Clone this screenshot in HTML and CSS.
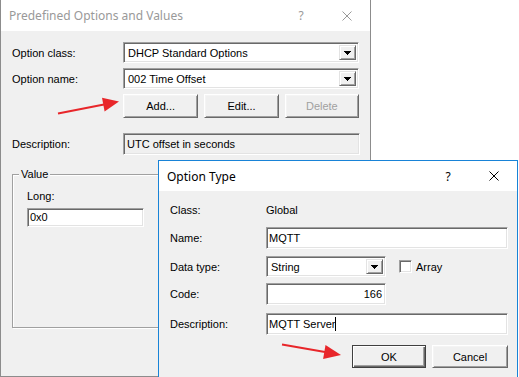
FILE: index.html
```html
<!DOCTYPE html>
<html lang="en">
<head>
    <meta charset="UTF-8">
    <meta name="viewport" content="width=device-width, initial-scale=1.0">
    <title>Predefined Options and Values</title>
    <link rel="stylesheet" href="styles.css">
</head>
<body>
<div class="desktop">
    <section class="dialog dialog-back">
        <header class="titlebar">
            <span class="title">Predefined Options and Values</span>
            <span class="tb-btn tb-help">?</span>
            <span class="tb-btn tb-close">
                <svg width="10" height="10" viewBox="0 0 10 10"><path d="M0.5 0.5L9.5 9.5M9.5 0.5L0.5 9.5"/></svg>
            </span>
        </header>
        <div class="dialog-body back-body">
            <div class="form-row">
                <span class="label">Option class:</span>
                <div class="combo combo-wide">
                    <span class="combo-text">DHCP Standard Options</span>
                    <span class="drop"><svg width="7" height="4" viewBox="0 0 7 4"><polygon points="0,0 7,0 3.5,4"/></svg></span>
                </div>
            </div>
            <div class="form-row row-name">
                <span class="label">Option name:</span>
                <div class="combo combo-wide">
                    <span class="combo-text">002 Time Offset</span>
                    <span class="drop"><svg width="7" height="4" viewBox="0 0 7 4"><polygon points="0,0 7,0 3.5,4"/></svg></span>
                </div>
            </div>
            <div class="btn-row back-buttons">
                <button class="btn btn-add">Add...</button>
                <button class="btn">Edit...</button>
                <button class="btn" disabled>Delete</button>
            </div>
            <div class="form-row row-desc">
                <span class="label">Description:</span>
                <div class="field field-readonly">UTC offset in seconds</div>
            </div>
            <div class="group">
                <span class="group-title">Value</span>
                <div class="group-content">
                    <span class="label">Long:</span>
                    <div class="field field-long">0x0</div>
                </div>
            </div>
        </div>
    </section>

    <section class="dialog dialog-front">
        <header class="titlebar">
            <span class="title">Option Type</span>
            <span class="tb-btn tb-help">?</span>
            <span class="tb-btn tb-close">
                <svg width="10" height="10" viewBox="0 0 10 10"><path d="M0.5 0.5L9.5 9.5M9.5 0.5L0.5 9.5"/></svg>
            </span>
        </header>
        <div class="dialog-body front-body">
            <div class="form-row row-class">
                <span class="label">Class:</span>
                <span class="value">Global</span>
            </div>
            <div class="form-row row-gap7">
                <span class="label">Name:</span>
                <div class="field field-full">MQTT</div>
            </div>
            <div class="form-row row-gap7">
                <span class="label">Data type:</span>
                <div class="type-line">
                    <div class="combo combo-short">
                        <span class="combo-text">String</span>
                        <span class="drop"><svg width="7" height="4" viewBox="0 0 7 4"><polygon points="0,0 7,0 3.5,4"/></svg></span>
                    </div>
                    <span class="check"></span>
                    <span class="check-label">Array</span>
                </div>
            </div>
            <div class="form-row row-code">
                <span class="label">Code:</span>
                <div class="field field-code">166</div>
            </div>
            <div class="form-row row-fdesc">
                <span class="label">Description:</span>
                <div class="field field-full">MQTT Server<span class="caret"></span></div>
            </div>
            <div class="btn-row front-buttons">
                <button class="btn btn-default">OK</button>
                <button class="btn btn-cancel">Cancel</button>
            </div>
        </div>
    </section>

    <svg class="arrows" width="519" height="377" viewBox="0 0 519 377">
        <line x1="58" y1="113.5" x2="104" y2="104.5"/>
        <polygon points="119,101.5 104.6,111.5 102,97.7"/>
        <line x1="282" y1="344.5" x2="325" y2="352"/>
        <polygon points="341,355 323.1,358.9 325.5,345.1"/>
    </svg>
</div>
</body>
</html>
```

FILE: styles.css
```css
body {
    margin: 0;
    background: #ffffff;
    font-family: "Liberation Sans", Arial, sans-serif;
    font-size: 11px;
    color: #000;
    overflow: hidden;
}
.desktop {
    position: relative;
    width: 519px;
    height: 377px;
    overflow: hidden;
}

/* windows */
.dialog {
    position: absolute;
    box-sizing: border-box;
    display: flex;
    flex-direction: column;
}
.dialog-back {
    left: 0;
    top: 0;
    width: 371px;
    height: 377px;
    border: 1px solid #8c8c8c;
    border-top: 0;
}
.dialog-front {
    left: 158px;
    top: 160px;
    width: 360px;
    height: 230px;
    border: 1px solid #1883d7;
}
.titlebar {
    display: flex;
    align-items: center;
    height: 31px;
    background: #fff;
    padding-left: 8px;
    font-family: "Noto Sans", "Open Sans", sans-serif;
    font-size: 12px;
}
.dialog-front .titlebar {
    height: 30px;
}
.dialog-back .titlebar {
    color: #999;
}
.title {
    flex: 1;
}
.tb-btn {
    width: 46px;
    height: 100%;
    display: flex;
    align-items: center;
    justify-content: center;
}
.tb-close svg {
    stroke: currentColor;
    stroke-width: 1;
}
.dialog-body {
    flex: 1;
    background: #f0f0f0;
}
.back-body {
    padding: 11px 11px 0 11px;
}
.front-body {
    padding: 8px 9px 0 11px;
}

/* rows */
.form-row {
    display: grid;
    grid-template-columns: 111px auto;
    align-items: center;
}
.front-body .form-row {
    grid-template-columns: 96px auto;
}
.row-name {
    margin-top: 5px;
}
.row-desc {
    margin-top: 15px;
}
.row-class {
    height: 21px;
}
.row-gap7 {
    margin-top: 7px;
}
.row-code {
    margin-top: 6px;
}
.row-fdesc {
    margin-top: 8px;
}

/* sunken controls */
.field,
.combo,
.check {
    box-sizing: border-box;
    border: 1px solid;
    border-color: #a0a0a0 #fff #fff #a0a0a0;
    box-shadow: inset 1px 1px 0 #696969, inset -1px -1px 0 #e3e3e3;
    background: #fff;
}
.field {
    height: 22px;
    line-height: 20px;
    padding-left: 2px;
    white-space: nowrap;
}
.field-readonly {
    width: 237px;
    background: #f0f0f0;
    padding-left: 3px;
}
.field-full {
    width: 242px;
}
.field-code {
    width: 120px;
    text-align: right;
    padding-right: 3px;
}
.field-long {
    width: 117px;
    height: 19px;
    line-height: 17px;
}
.caret {
    display: inline-block;
    width: 1px;
    height: 14px;
    background: #000;
    vertical-align: -3px;
}

.combo {
    display: flex;
    height: 21px;
    padding: 2px;
}
.combo-wide {
    width: 236px;
}
.combo-short {
    width: 120px;
}
.combo-text {
    flex: 1;
    line-height: 17px;
    padding-left: 2px;
}
.drop {
    box-sizing: border-box;
    width: 17px;
    display: flex;
    align-items: center;
    justify-content: center;
    background: #f0f0f0;
    border: 1px solid;
    border-color: #e3e3e3 #696969 #696969 #e3e3e3;
    box-shadow: inset 1px 1px 0 #fff, inset -1px -1px 0 #a0a0a0;
}
.drop svg {
    shape-rendering: crispEdges;
}

.type-line {
    display: flex;
    align-items: center;
}
.check {
    width: 13px;
    height: 13px;
    margin-left: 13px;
}
.check-label {
    margin-left: 4px;
}

/* buttons */
.btn-row {
    display: flex;
    gap: 6px;
}
.back-buttons {
    margin-top: 5px;
    padding-left: 111px;
}
.front-buttons {
    margin-top: 10px;
    justify-content: flex-end;
}
.btn {
    box-sizing: border-box;
    width: 75px;
    height: 24px;
    margin: 0;
    padding: 0;
    font-family: inherit;
    font-size: 11px;
    color: #000;
    background: #f0f0f0;
    border: 1px solid;
    border-color: #fff #696969 #696969 #fff;
    box-shadow: inset 1px 1px 0 #f4f4f4, inset -1px -1px 0 #a0a0a0;
    border-radius: 0;
}
.btn-add {
    width: 76px;
}
.btn:disabled {
    color: #a0a0a0;
}
.front-buttons .btn {
    height: 23px;
}
.btn-default {
    width: 74px;
    border-color: #404040;
    box-shadow: inset 1px 1px 0 #fff, inset -1px -1px 0 #696969, inset -2px -2px 0 #a0a0a0;
}
.btn-cancel {
    width: 76px;
}

/* group box */
.group {
    box-sizing: border-box;
    width: 348px;
    height: 154px;
    margin-top: 19px;
    border: 1px solid #a0a0a0;
    box-shadow: 1px 1px 0 #fff, inset 1px 1px 0 #fff;
}
.group-title {
    display: block;
    width: fit-content;
    margin: -7px 0 0 6px;
    padding: 0 2px;
    line-height: 13px;
    background: #f0f0f0;
}
.group-content {
    display: flex;
    flex-direction: column;
    align-items: flex-start;
    padding-left: 14px;
    margin-top: 9px;
}
.group-content .label {
    line-height: 13px;
    margin-bottom: 5px;
}

/* arrows */
.arrows {
    position: absolute;
    left: 0;
    top: 0;
    pointer-events: none;
}
.arrows line {
    stroke: #e8262a;
    stroke-width: 2;
}
.arrows polygon {
    fill: #e8262a;
}
```
